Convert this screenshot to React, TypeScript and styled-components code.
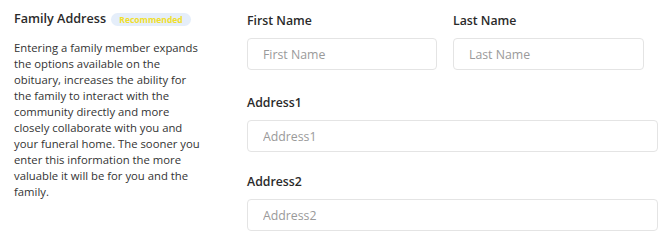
import React from "react";
import styled, { createGlobalStyle } from "styled-components";

const Global = createGlobalStyle`
  html, body { margin: 0; padding: 0; background: #fff; }
  body { font-family: "Open Sans", "Noto Sans", sans-serif; color: #2b2b2b; }
  * { box-sizing: border-box; }
`;

const Page = styled.div`
  display: grid;
  grid-template-columns: 233px 411px;
  padding: 10px 0 0 14px;
`;

const Intro = styled.section`
  display: flex;
  flex-direction: column;
  width: 190px;
`;

const TitleRow = styled.div`
  display: flex;
  align-items: center;
  gap: 5px;
  height: 18px;
`;

const Title = styled.h2`
  margin: 0;
  font-size: 12.6px;
  font-weight: 600;
  color: #2a2a2a;
  line-height: 18px;
  white-space: nowrap;
`;

const Badge = styled.span`
  display: inline-flex;
  align-items: center;
  justify-content: center;
  width: 80px;
  height: 13px;
  border-radius: 7px;
  background: #e5eefa;
  color: #f0de2a;
  font-size: 8.5px;
  font-weight: 700;
`;

const Description = styled.p`
  margin: 12px 0 0;
  font-size: 11.3px;
  line-height: 16px;
  color: #333;
`;

const Form = styled.form`
  display: flex;
  flex-direction: column;
  gap: 19px;
`;

const NameRow = styled.div`
  display: grid;
  grid-template-columns: 190px 191px;
  column-gap: 16px;
  margin-bottom: 3px;
`;

const Field = styled.label`
  display: flex;
  flex-direction: column;
`;

const Label = styled.span`
  font-size: 12.3px;
  font-weight: 600;
  line-height: 22px;
  color: #2a2a2a;
  margin-bottom: 6px;
`;

const Input = styled.input`
  height: 32px;
  width: 100%;
  border: 1px solid #e4e4e4;
  border-radius: 4px;
  padding: 0 15px;
  font-family: "Open Sans", "Noto Sans", sans-serif;
  font-size: 12.3px;
  color: #333;
  outline: none;
  &::placeholder { color: #9a9a9a; }
`;

export default function App() {
  return (
    <>
      <Global />
      <Page>
        <Intro>
          <TitleRow>
            <Title>Family Address</Title>
            <Badge>Recommended</Badge>
          </TitleRow>
          <Description>
            Entering a family member expands the options available on the obituary, increases the
            ability for the family to interact with the community directly and more closely
            collaborate with you and your funeral home. The sooner you enter this information the
            more valuable it will be for you and the family.
          </Description>
        </Intro>
        <Form onSubmit={(e) => e.preventDefault()}>
          <NameRow>
            <Field>
              <Label>First Name</Label>
              <Input placeholder="First Name" />
            </Field>
            <Field>
              <Label>Last Name</Label>
              <Input placeholder="Last Name" />
            </Field>
          </NameRow>
          <Field>
            <Label>Address1</Label>
            <Input placeholder="Address1" />
          </Field>
          <Field>
            <Label>Address2</Label>
            <Input placeholder="Address2" />
          </Field>
        </Form>
      </Page>
    </>
  );
}
